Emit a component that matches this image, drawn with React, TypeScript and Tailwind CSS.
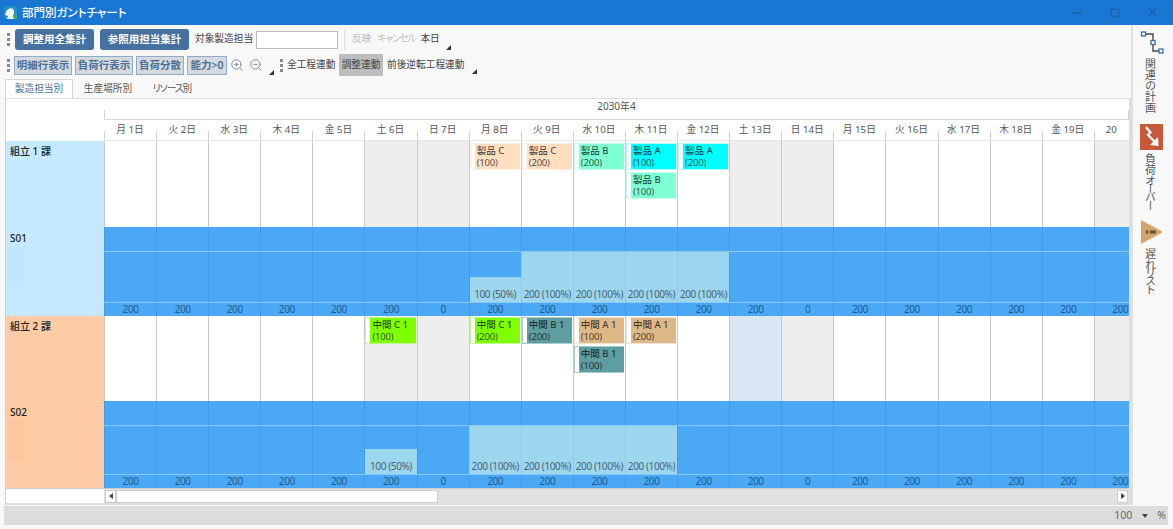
import React from "react";
import { Minus, Square, X, ZoomIn, ZoomOut } from "lucide-react";

type Task = { name: string; qty: string; cls: string; edge: string };

const weekdays = ["月", "火", "水", "木", "金", "土", "日"];
const A = "bg-[#00ffff]", B = "bg-[#7fffd4]", C = "bg-[#ffdfc0]";
const G = "bg-[#7fff00]", T = "bg-[#5f9ea0]", U = "bg-[#deb887]";
const eA = "border-[#b0ffff]", eB = "border-[#c8fff0]", eC = "border-[#fff0e0]";
const eG = "border-[#c4fb90]", eT = "border-[#a5cbcc]", eU = "border-[#f0e4d4]";
const t = (name: string, qty: string, cls: string, edge: string): Task => ({ name, qty, cls, edge });

function dayMeta(i: number) {
  const d = i + 1;
  const wd = i % 7;
  return {
    d,
    label: d === 20 ? "20" : `${weekdays[wd]} ${d}日`,
    off: wd === 5 || wd === 6,
    total: wd === 6 ? "0" : "200",
  };
}

const tasks1: Record<number, Task[]> = {
  8: [t("製品 C", "(100)", C, eC)],
  9: [t("製品 C", "(200)", C, eC)],
  10: [t("製品 B", "(200)", B, eB)],
  11: [t("製品 A", "(100)", A, eA), t("製品 B", "(100)", B, eB)],
  12: [t("製品 A", "(200)", A, eA)],
};
const tasks2: Record<number, Task[]> = {
  6: [t("中間 C 1", "(100)", G, eG)],
  8: [t("中間 C 1", "(200)", G, eG)],
  9: [t("中間 B 1", "(200)", T, eT)],
  10: [t("中間 A 1", "(100)", U, eU), t("中間 B 1", "(100)", T, eT)],
  11: [t("中間 A 1", "(200)", U, eU)],
};
const fill1: Record<number, string> = { 8: "100 (50%)", 9: "200 (100%)", 10: "200 (100%)", 11: "200 (100%)", 12: "200 (100%)" };
const fill2: Record<number, string> = { 6: "100 (50%)", 8: "200 (100%)", 9: "200 (100%)", 10: "200 (100%)", 11: "200 (100%)" };

const days = Array.from({ length: 20 }, (_, i) => dayMeta(i));
const gridCols = "grid grid-cols-[repeat(19,52.1px)_35.1px]";

function Grip({ h }: { h: string }) {
  return <div className={`${h} w-0 border-l-[3px] border-dotted border-[#888]`} />;
}

function Corner() {
  return (
    <svg width="5" height="5" viewBox="0 0 5 5" className="self-end">
      <polygon points="5,0 5,5 0,5" fill="#333" />
    </svg>
  );
}

function Toggle({ children, w }: { children: React.ReactNode; w: string }) {
  return (
    <div className={`${w} h-[19px] flex items-center justify-center bg-[#d6dade] border border-[#8fabc8] text-[10.5px] leading-none font-semibold text-[#4a7199] whitespace-nowrap`}>
      {children}
    </div>
  );
}

function TaskBar({ task }: { task: Task }) {
  return (
    <div className={`h-[27px] shrink-0 flex border-l border-t border-b ${task.edge}`}>
      <div className="w-[4px] bg-white" />
      <div className={`flex-1 ${task.cls} pl-[2px] pt-px text-[9.5px] leading-[12px] text-black/70 whitespace-nowrap overflow-hidden`}>
        <div className="font-medium">{task.name}</div>
        <div className="tracking-[-0.2px]">{task.qty}</div>
      </div>
    </div>
  );
}

function GroupRow({
  title, code, labelBg, patch, tasks, fills, taskH, areaH, halfH, group,
}: {
  title: string; code: string; labelBg: string; patch: string;
  tasks: Record<number, Task[]>; fills: Record<number, string>;
  taskH: string; areaH: string; halfH: string; group: number;
}) {
  return (
    <div className="flex">
      <div className={`w-[98px] shrink-0 flex flex-col ${labelBg} text-[10px] text-[#222]`}>
        <div className={`${taskH} shrink-0 pl-[4px] pt-[3px] font-medium`}>{title}</div>
        <div className="pl-[4px] pt-[3px] font-medium leading-[16px]">{code}</div>
        <div className={`ml-[3px] w-[16px] h-[40px] ${patch}`} />
      </div>
      <div className={gridCols}>
        {days.map((d) => {
          const tint = group === 2 && d.d === 13 ? "bg-[#d8e7f3]" : d.off || d.d === 20 ? "bg-[#eeeeee]" : "bg-white";
          const fill = fills[d.d];
          const full = fill && !fill.includes("50%");
          return (
            <div key={d.d} className="flex flex-col overflow-hidden">
              <div className={`${taskH} shrink-0 ${tint} border-l border-[#c9c9c9] ${group === 1 ? "pt-[2px]" : "pt-[1px]"} pr-[1px] flex flex-col gap-[2px]`}>
                {(tasks[d.d] || []).map((k, i) => <TaskBar key={i} task={k} />)}
              </div>
              <div className="h-[24px] shrink-0 bg-[#4aa8f5] border-l border-[#3f9ce8]" />
              <div className="h-[1px] shrink-0 bg-[#8cc8f7]" />
              <div className={`${areaH} shrink-0 bg-[#4aa8f5] border-l ${full ? "border-[#8ecbe8]" : "border-[#3f9ce8]"} flex flex-col justify-end`}>
                {fill && (
                  <div className={`${full ? "h-full" : halfH} bg-[#9dd6ef] flex items-end justify-center pb-[1px] text-[10px] tracking-[-0.4px] leading-[13px] text-[#4b6473] whitespace-nowrap`}>
                    {fill}
                  </div>
                )}
              </div>
              <div className="h-[1px] shrink-0 bg-[#8cc8f7]" />
              <div className="h-[13px] shrink-0 bg-[#4aa8f5] border-l border-[#3f9ce8] w-[52.1px] text-center text-[10px] tracking-[-0.4px] leading-[13px] text-[#1f5c8f]">
                {d.total}
              </div>
            </div>
          );
        })}
      </div>
    </div>
  );
}

function VLabel({ children }: { children: React.ReactNode }) {
  return (
    <div className="mr-[3px] [writing-mode:vertical-rl] whitespace-nowrap text-[11px] leading-[13px] text-[#555]">
      {children}
    </div>
  );
}

export default function App() {
  return (
    <div className="w-[1173px] h-[529px] overflow-hidden flex flex-col bg-[#f8f8f8] [font-feature-settings:'palt'] font-['Noto_Sans','Noto_Sans_CJK_JP',sans-serif]">
      {/* title bar */}
      <div className="h-[25px] shrink-0 bg-[#1976d2] flex items-center pl-[4px] pr-[14px] text-white">
        <svg width="13" height="13" viewBox="0 0 13 13">
          <rect width="13" height="13" rx="1" fill="#1f8fc8" />
          <path d="M1 9 C2 4 6 1 9 3 C11 5 10 8 9 10 L10 13 L3 13 L4 10 Z" fill="#f2f5ee" />
          <path d="M9 9 L13 8 L13 13 L10 13 Z" fill="#3aa58a" />
        </svg>
        <div className="ml-[5px] text-[11.5px] font-medium">部門別ガントチャート</div>
        <div className="ml-auto flex items-center gap-[24px] text-[#24486f]">
          <Minus size={14} strokeWidth={1.4} />
          <Square size={10} strokeWidth={1.4} className="mx-[2px]" />
          <X size={13} strokeWidth={1.4} />
        </div>
      </div>

      <div className="flex h-[480px] shrink-0">
        {/* left content */}
        <div className="w-[1131px] shrink-0 flex flex-col">
          {/* row 1 */}
          <div className="h-[23px] mt-[3px] flex items-center pl-[7px]">
            <Grip h="h-[13px]" />
            <button className="ml-[5px] w-[79px] h-[21px] rounded-[3px] bg-[#44719f] text-white text-[10.5px] font-semibold leading-none whitespace-nowrap">調整用全集計</button>
            <button className="ml-[6px] w-[89px] h-[21px] rounded-[3px] bg-[#44719f] text-white text-[10.5px] font-semibold leading-none whitespace-nowrap">参照用担当集計</button>
            <span className="ml-[6px] w-[58px] text-[9.7px] text-[#444] whitespace-nowrap">対象製造担当</span>
            <div className="ml-[3px] w-[82px] h-[18px] bg-white border border-[#bbb]" />
            <div className="ml-[6px] w-px h-[20px] bg-[#ddd]" />
            <span className="ml-[7px] text-[9.7px] text-[#bbb] whitespace-nowrap">反映</span>
            <span className="ml-[6px] w-[36px] tracking-[-1.2px] text-[9.7px] text-[#bbb] whitespace-nowrap">キャンセル</span>
            <span className="ml-[7px] w-[19px] text-[9.7px] text-[#444] whitespace-nowrap">本日</span>
            <div className="ml-[7px] self-end mb-px flex"><Corner /></div>
          </div>
          {/* row 2 */}
          <div className="h-[22px] mt-[3px] flex items-center pl-[7px]">
            <Grip h="h-[13px]" />
            <div className="ml-[4px] flex gap-[3px]">
              <Toggle w="w-[58px]">明細行表示</Toggle>
              <Toggle w="w-[58px]">負荷行表示</Toggle>
              <Toggle w="w-[48px]">負荷分散</Toggle>
              <Toggle w="w-[40px]">能力&gt;0</Toggle>
            </div>
            <ZoomIn size={14} strokeWidth={1.4} className="ml-[3px] text-[#667a8c]" />
            <ZoomOut size={14} strokeWidth={1.4} className="ml-[5px] text-[#667a8c]" />
            <div className="ml-[6px] self-end mb-[1px] flex"><Corner /></div>
            <div className="ml-[6px]"><Grip h="h-[13px]" /></div>
            <span className="ml-[4px] w-[49px] text-[9.7px] text-[#444] whitespace-nowrap">全工程連動</span>
            <div className="ml-[3px] w-[44px] h-[22px] bg-[#bdbdbd] flex items-center justify-center text-[9.7px] text-[#444] whitespace-nowrap">調整連動</div>
            <span className="ml-[4px] w-[77px] text-[9.7px] text-[#444] whitespace-nowrap">前後逆転工程連動</span>
            <div className="ml-[8px] self-end mb-[2px] flex"><Corner /></div>
          </div>
          {/* tabs */}
          <div className="h-[20px] mt-[3px] ml-[5px] flex items-end text-[9.7px] text-[#555]">
            <div className="w-[68px] h-[20px] bg-white border border-b-0 border-[#d5d5d5] flex items-center justify-center text-[#4a7199] whitespace-nowrap">製造担当別</div>
            <div className="ml-[10px] w-[50px] h-[20px] flex items-center justify-center whitespace-nowrap">生産場所別</div>
            <div className="ml-[19px] w-[40px] h-[20px] flex items-center justify-center tracking-[-1px] whitespace-nowrap">リソース別</div>
          </div>
          {/* gantt panel */}
          <div className="ml-[5px] w-[1126px] border-l border-r-2 border-b-2 border-l-[#ccc] border-r-[#ddd] border-b-[#ddd] bg-white flex flex-col overflow-hidden -mt-px">
            <div className="flex">
              <div className="w-[98px] shrink-0 bg-white border-t border-[#ddd]" />
              <div className="w-[1025px] flex flex-col">
                <div className="h-[22px] border-t border-[#ddd] bg-white">
                  <div className="h-[21px] relative flex items-start justify-center text-[10px] leading-[15px] text-[#555] border-b border-[#d5d5d5]">
                    2030年4
                    <div className="absolute left-0 bottom-0 h-[9px] w-px bg-[#d5d5d5]" />
                    <div className="absolute right-0 bottom-0 h-[9px] w-px bg-[#d5d5d5]" />
                  </div>
                </div>
                <div className={`${gridCols} h-[21px] bg-white border-b border-[#e6e6e6]`}>
                  {days.map((d) => (
                    <div key={d.d} className="relative h-[20px] flex items-center justify-center pt-[1px] text-[9.7px] text-[#555] whitespace-nowrap">
                      {d.label}
                      <div className="absolute left-0 bottom-0 h-[9px] w-px bg-[#d0d0d0]" />
                    </div>
                  ))}
                </div>
              </div>
            </div>
            <GroupRow group={1} title="組立 1 課" code="S01" labelBg="bg-[#c5e9ff]" patch="bg-[#c0e6fd]" tasks={tasks1} fills={fill1} taskH="h-[86px]" areaH="h-[50px]" halfH="h-[25px]" />
            <GroupRow group={2} title="組立 2 課" code="S02" labelBg="bg-[#fdcba4]" patch="bg-[#fcc79c]" tasks={tasks2} fills={fill2} taskH="h-[85px]" areaH="h-[48px]" halfH="h-[25px]" />
            {/* scrollbar */}
            <div className="flex h-[15px] border-t border-[#ccc]">
              <div className="w-[98px] shrink-0 bg-white" />
              <div className="w-[1025px] flex items-center bg-[#e2e2e2]">
                <div className="ml-px w-[11px] h-[13px] bg-white border border-[#ccc] flex items-center justify-center">
                  <svg width="4" height="6" viewBox="0 0 4 6"><polygon points="4,0 4,6 0,3" fill="#444" /></svg>
                </div>
                <div className="w-[322px] h-[13px] bg-white border border-[#ccc]" />
                <div className="ml-auto mr-px w-[11px] h-[13px] bg-white border border-[#ccc] flex items-center justify-center">
                  <svg width="4" height="6" viewBox="0 0 4 6"><polygon points="0,0 0,6 4,3" fill="#444" /></svg>
                </div>
              </div>
            </div>
          </div>
        </div>

        {/* right rail */}
        <div className="w-[42px] shrink-0 border-l-2 border-[#e0e0e0] flex flex-col items-center pr-[3px] pt-[6px]">
          <svg width="24" height="24" viewBox="0 0 24 24">
            <path d="M4 3 H13 V20 H21" fill="none" stroke="#444" strokeWidth="1.4" />
            <rect x="1.5" y="1" width="4" height="4" fill="#fff" stroke="#3a6ea5" strokeWidth="1.3" />
            <rect x="11" y="9.5" width="4" height="4" fill="#fff" stroke="#3a6ea5" strokeWidth="1.3" />
            <rect x="19" y="18" width="4" height="4" fill="#fff" stroke="#3a6ea5" strokeWidth="1.3" />
          </svg>
          <div className="mt-[3px] h-[55px]"><VLabel>関連の計画</VLabel></div>
          <svg width="23" height="26" viewBox="0 0 23 26" className="mt-[11px]">
            <rect width="23" height="26" fill="#c8583a" />
            <path d="M6 3 L10.5 8.5 L8 11 L15 18" fill="none" stroke="#fff" strokeWidth="2.2" />
            <polygon points="18.5,22 10,21 18,13" fill="#fff" />
          </svg>
          <div className="mt-[3px] h-[55px]"><VLabel>負荷<span className="tracking-[-2.6px]">オーバー</span></VLabel></div>
          <svg width="22" height="24" viewBox="0 0 22 24" className="mt-[12px]">
            <polygon points="0,0 22,12 0,24" fill="#d4a36c" />
            <rect x="9" y="10.5" width="6" height="3" fill="#6b5236" />
            <rect x="5" y="10.5" width="2.4" height="3" fill="#6b5236" />
          </svg>
          <div className="mt-[4px] h-[46px]"><VLabel>遅<span className="tracking-[-2.6px]">れリスト</span></VLabel></div>
        </div>
      </div>

      {/* status bar */}
      <div className="mt-[1px] ml-[4px] w-[1164px] h-[19px] bg-[#dcdcdc] flex items-center text-[10.5px] text-[#666]">
        <span className="ml-auto">100</span>
        <svg width="6" height="4" viewBox="0 0 6 4" className="ml-[10px]"><polygon points="0,0 6,0 3,4" fill="#444" /></svg>
        <span className="ml-[9px] mr-[2px]">%</span>
      </div>
    </div>
  );
}
